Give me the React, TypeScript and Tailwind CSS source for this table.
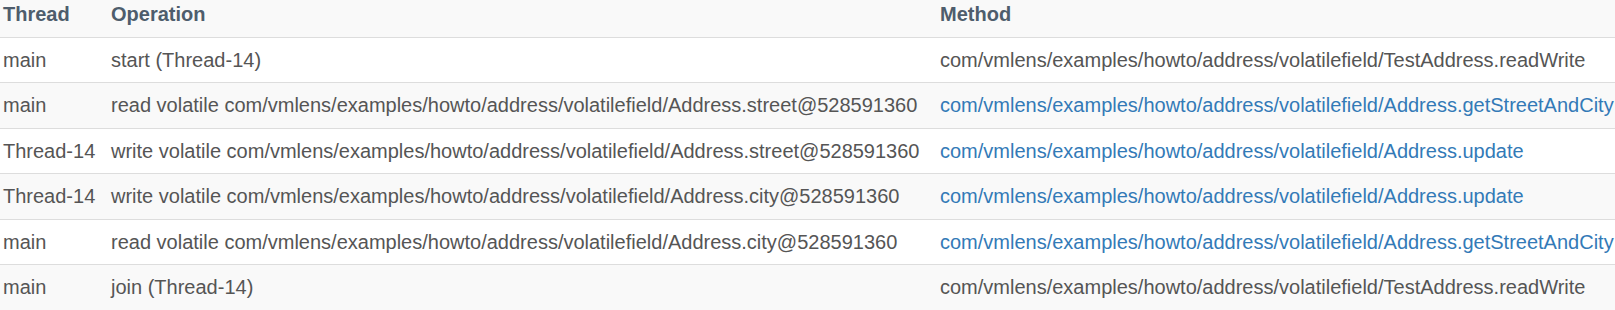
import React from "react";

type Row = { thread: string; op: string; method: string; link: boolean };

const rows: Row[] = [
  { thread: "main", op: "start (Thread-14)", method: "com/vmlens/examples/howto/address/volatilefield/TestAddress.readWrite", link: false },
  { thread: "main", op: "read volatile com/vmlens/examples/howto/address/volatilefield/Address.street@528591360", method: "com/vmlens/examples/howto/address/volatilefield/Address.getStreetAndCity", link: true },
  { thread: "Thread-14", op: "write volatile com/vmlens/examples/howto/address/volatilefield/Address.street@528591360", method: "com/vmlens/examples/howto/address/volatilefield/Address.update", link: true },
  { thread: "Thread-14", op: "write volatile com/vmlens/examples/howto/address/volatilefield/Address.city@528591360", method: "com/vmlens/examples/howto/address/volatilefield/Address.update", link: true },
  { thread: "main", op: "read volatile com/vmlens/examples/howto/address/volatilefield/Address.city@528591360", method: "com/vmlens/examples/howto/address/volatilefield/Address.getStreetAndCity", link: true },
  { thread: "main", op: "join (Thread-14)", method: "com/vmlens/examples/howto/address/volatilefield/TestAddress.readWrite", link: false },
];

export default function App() {
  return (
    <div
      className="w-[1615px] h-[310px] overflow-hidden bg-white"
      style={{ fontFamily: '"Liberation Sans", Arial, sans-serif' }}
    >
      <table className="table-fixed border-collapse w-[1630px] ml-[-5px] text-[20px] leading-[1.42857] text-[#555]">
        <colgroup>
          <col className="w-[108px]" />
          <col className="w-[829px]" />
          <col />
        </colgroup>
        <thead>
          <tr className="bg-[#f9f9f9] border-b border-[#ddd]">
            <th className="text-left font-bold text-[#4e5d6c] px-2 pt-0 pb-2 whitespace-nowrap">Thread</th>
            <th className="text-left font-bold text-[#4e5d6c] px-2 pt-0 pb-2 whitespace-nowrap">Operation</th>
            <th className="text-left font-bold text-[#4e5d6c] px-2 pt-0 pb-2 whitespace-nowrap">Method</th>
          </tr>
        </thead>
        <tbody>
          {rows.map((r, i) => (
            <tr
              key={i}
              className={(i % 2 === 1 ? "bg-[#f9f9f9]" : "bg-white") + " border-b border-[#ddd]"}
            >
              <td className="px-2 py-2 whitespace-nowrap">{r.thread}</td>
              <td className="px-2 py-2 whitespace-nowrap">{r.op}</td>
              <td className="px-2 py-2 whitespace-nowrap">
                {r.link ? (
                  <a href="#" className="text-[#337ab7] no-underline">{r.method}</a>
                ) : (
                  r.method
                )}
              </td>
            </tr>
          ))}
        </tbody>
      </table>
    </div>
  );
}
